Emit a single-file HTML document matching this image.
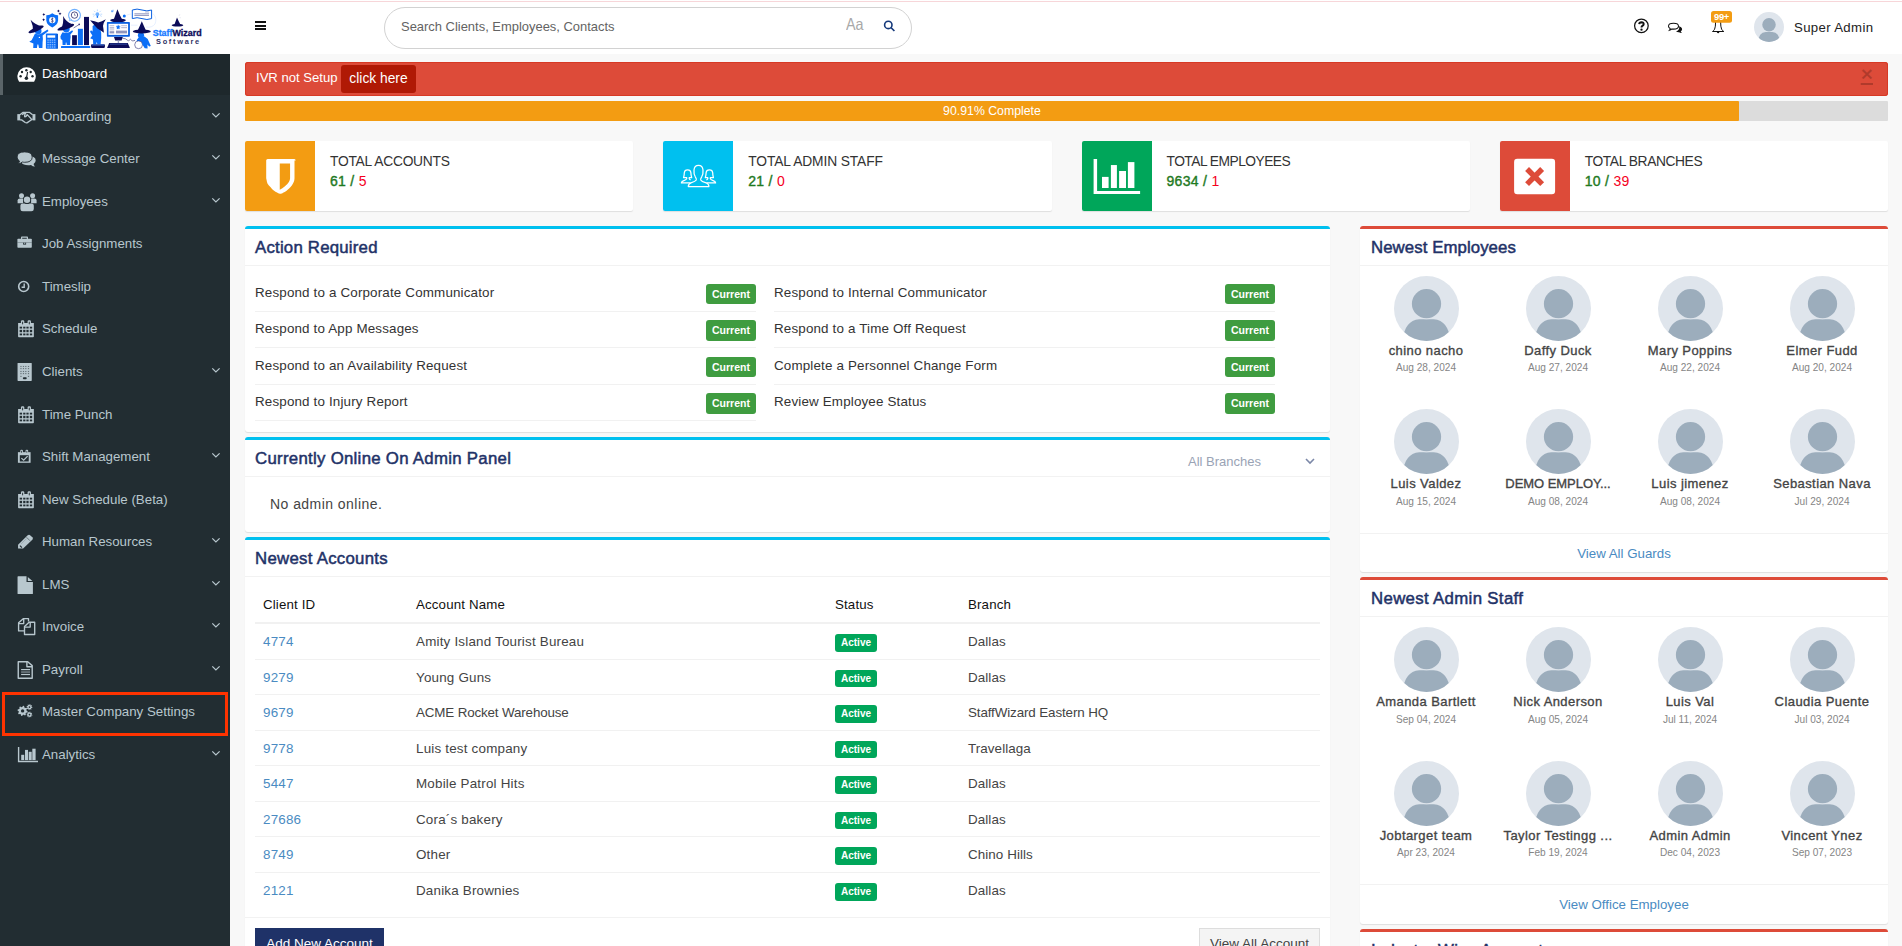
<!DOCTYPE html>
<html>
<head>
<meta charset="utf-8">
<title>Dashboard</title>
<style>
*{box-sizing:border-box;margin:0;padding:0}
html,body{width:1902px;height:946px;overflow:hidden}
body{font-family:"Liberation Sans",sans-serif;font-size:13px;color:#333;background:#f8f8f8;position:relative}
a{text-decoration:none;color:#4a8bc2}
#topline{position:absolute;left:0;top:1px;width:1902px;height:1px;background:#f7d6d9;z-index:5}
#header{position:absolute;left:0;top:0;width:1902px;height:54px;background:#fff}
#hamb{position:absolute;left:255px;top:21px;width:11px;height:9px}
#hamb i{display:block;height:2px;background:#111;margin-bottom:1.5px}
#search{position:absolute;left:384px;top:7px;width:528px;height:42px;border:1px solid #d2d2d2;border-radius:21px;background:#fff}
#search .ph{position:absolute;left:16px;top:11px;font-size:12.95px;color:#636363;white-space:nowrap}
#search .aa{position:absolute;left:461px;top:7px;font-size:16.5px;color:#a8a8a8;transform:scaleX(.87);transform-origin:0 0}
#search svg{position:absolute;left:498px;top:11px}
#sidebar{position:absolute;left:0;top:54px;width:230px;height:892px;background:#222d32}
.mi{position:absolute;left:0;width:230px;height:42.56px;color:#b8c7ce;font-size:13.3px}
.mi .t{position:absolute;left:42px;top:12px;line-height:16px;white-space:nowrap}
.mi svg.ic{position:absolute;left:16px;top:10px}
.mi svg.ch{position:absolute;left:211px;top:15px}
.mi.act{background:#1e282c;color:#fff;height:40.5px}
.mi.act:before{content:"";position:absolute;left:0;top:0;width:3px;height:100%;background:#5a6468}
#hl{position:absolute;left:2px;top:637.5px;width:225.5px;height:44px;border:3px solid #ff3300}
#alert{position:absolute;left:245px;top:62px;width:1643px;height:34px;background:#dd4b39;border-radius:3px;color:#fff;box-shadow:inset 0 0 0 1px #d73925}
#alert .at{position:absolute;left:11px;top:8px;font-size:13.1px}
#alert .btn{position:absolute;left:96px;top:3px;width:75px;height:28px;background:#b01905;border-radius:3px;font-size:13.8px;text-align:center;line-height:27px}
#alert .x{position:absolute;right:15px;top:0px;font-size:21px;-webkit-text-stroke:.4px #b03a2b;color:#b03a2b;text-decoration:underline}
#prog{position:absolute;left:245px;top:101px;width:1643px;height:20px;background:#dcdcdc;border-radius:1px}
#prog .bar{position:absolute;left:0;top:0;width:1494px;height:20px;background:#f39c12;border-radius:1px}
#prog .pt{position:absolute;left:0;top:3px;width:1494px;text-align:center;color:#fff;font-size:12.3px}
.stat{position:absolute;top:141px;width:388.25px;height:70px;background:#fff;border-radius:2px;box-shadow:0 1px 1px rgba(0,0,0,.1)}
.stat .sic{position:absolute;left:0;top:0;width:70px;height:70px;border-radius:2px 0 0 2px}
.stat .sic svg{position:absolute}
.stat .st{position:absolute;left:85px;top:13px;font-size:13.8px;color:#333;white-space:nowrap}
.stat .sn{position:absolute;left:85px;top:32px;font-size:14px;letter-spacing:.3px;white-space:nowrap}
.stat .g{color:#1f7a1f;-webkit-text-stroke:.4px #1f7a1f}.stat .r{color:#f5001d;font-weight:normal}
.panel{position:absolute;background:#fff;border-radius:3px;box-shadow:0 1px 1px rgba(0,0,0,.1)}
.panel .bt{position:absolute;left:0;top:0;width:100%;height:3px;border-radius:3px 3px 0 0}
.panel h3{position:absolute;left:10px;top:12px;font-size:16.8px;font-weight:normal;-webkit-text-stroke:.5px #1f3268;letter-spacing:.08px;color:#1f3268;line-height:20px;white-space:nowrap}
.panel .hs{position:absolute;left:0;top:39px;width:100%;height:1px;background:#f2f2f2}
.aqua{background:#00c0ef}.red{background:#dd4b39}
.ar{position:absolute;width:501px;height:37.2px;border-bottom:1px solid #f1f1f1}
.ar.nb{border-bottom:none}
.ar .tx{position:absolute;left:0;top:10px;font-size:13.4px;letter-spacing:.16px;color:#333;white-space:nowrap}
.ar .cur{position:absolute;right:0;top:9px;width:50px;height:20px;background:#3f9c40;color:#fff;border-radius:3px;font-size:10.5px;font-weight:bold;text-align:center;line-height:20px}
.sel{position:absolute;left:943px;top:17px;font-size:13px;color:#9aa3b5}
.noadm{position:absolute;left:25px;top:59px;font-size:14px;letter-spacing:.45px;color:#444}
.th{position:absolute;top:60px;font-size:13.3px;letter-spacing:.15px;color:#111;white-space:nowrap}
.thb{position:absolute;left:10px;top:85px;width:1065px;height:2px;background:#f1f1f1}
.tr{position:absolute;left:10px;width:1065px;height:35.57px;border-bottom:1px solid #f1f1f1;font-size:13.4px;letter-spacing:.2px;color:#444}
.tr .c1{position:absolute;left:8px;top:10px}
.tr .c2{position:absolute;left:161px;top:10px;white-space:nowrap}
.tr .c4{position:absolute;left:713px;top:10px;letter-spacing:.08px;white-space:nowrap}
.tr .act{position:absolute;left:580px;top:10px;letter-spacing:0;width:42px;height:17.6px;background:#00a65a;color:#fff;border-radius:3px;font-size:10px;font-weight:bold;text-align:center;line-height:17.6px}
.fs{position:absolute;left:0;top:380px;width:100%;height:1px;background:#f2f2f2}
.btn1{position:absolute;left:10px;top:391px;width:129px;height:34px;background:#1f3268;color:#fff;border-radius:0;font-size:13.5px;text-align:center;line-height:31px}
.btn2{position:absolute;left:954px;top:391px;width:121px;height:34px;background:#f4f4f4;border:1px solid #ddd;color:#444;border-radius:0;font-size:13.5px;text-align:center;line-height:30px}
.pp{position:absolute;width:132px;height:110px;text-align:center}
.pp svg{position:absolute;left:33.5px;top:0}
.pp .pn{position:absolute;left:0;top:67.3px;width:132px;font-size:13px;font-weight:normal;-webkit-text-stroke:.34px #444;color:#444;letter-spacing:.42px;white-space:nowrap}
.pp .pd{position:absolute;left:0;top:85.4px;width:132px;font-size:10.1px;color:#858585}
.fs2{position:absolute;left:0;top:307px;width:100%;height:1px;background:#f2f2f2}
.va{position:absolute;left:0;top:320px;width:100%;text-align:center;font-size:13.3px}
#uname{position:absolute;left:1794px;top:20px;font-size:13.2px;color:#222;white-space:nowrap;letter-spacing:.35px}
.tr:last-of-type{}
.tr.nb{border-bottom:none}

</style>
</head>
<body>
<div id="header"></div><div id="topline"></div>
<svg id="logo" style="position:absolute;left:0;top:0" width="230" height="54" viewBox="0 0 230 54"><g fill="#0b0b58"><path d="M43.8 13.1l.5 1 1 .5-1 .5-.5 1-.5-1-1-.5 1-.5z"/><path d="M43.6 18.3l.5 1 1 .5-1 .5-.5 1-.5-1-1-.5 1-.5z"/><path d="M58.4 9.5l.5 1 1 .5-1 .5-.5 1-.5-1-1-.5 1-.5z"/><path d="M60 12.3l.5 1 1 .5-1 .5-.5 1-.5-1-1-.5 1-.5z"/></g><path d="M46.3 15.2Q49.5 15.4 52.3 13.2Q55.1 15.4 58.1 15.2V20.5Q57.6 25 52.3 27.4Q46.8 25 46.3 20.5z" fill="#0c6ff7"/><circle cx="52.3" cy="20.1" r="3.2" fill="#fff"/><path d="M53.3 18.6Q52 17.9 51.5 18.9Q51.3 19.8 52.4 20.1Q53.5 20.5 53.2 21.5Q52.6 22.4 51.2 21.6M52.3 17.4V22.8" stroke="#0b0b58" stroke-width=".55" fill="none"/><g fill="#0c6ff7"><circle cx="38.2" cy="31" r="3.3"/><path d="M35 33.6Q38 35 41.2 33.4L47.6 29.6L48.5 30.9L42.6 35.6Q43.2 39 42.6 42.2L42.4 47.9H39L38.3 44.6H37.4L37 47.9H33.2L33.4 43.4L29.3 41.8L31.6 40.2Q33.4 37 35 33.6z"/></g><g fill="#0b0b58"><path d="M30.6 19.8Q34.6 24.6 41.8 26.2L33 31.5Q33.4 26 30.6 19.8z"/><ellipse cx="36.1" cy="29.3" rx="8.3" ry="2" transform="rotate(-24 36.1 29.3)"/></g><circle cx="39.4" cy="37.4" r=".7" fill="#fff"/><rect x="45.9" y="33.6" width="11.9" height="15.1" rx=".8" fill="#0c6ff7"/><rect x="47.3" y="35.3" width="7.9" height="2.4" fill="#fff"/><g fill="#7db3ff"><rect x="47.3" y="39.4" width="1.5" height="1.4"/><rect x="47.3" y="41.699999999999996" width="1.5" height="1.4"/><rect x="47.3" y="44" width="1.5" height="1.4"/><rect x="47.3" y="46.3" width="1.5" height="1.4"/><rect x="49.5" y="39.4" width="1.5" height="1.4"/><rect x="49.5" y="41.699999999999996" width="1.5" height="1.4"/><rect x="49.5" y="44" width="1.5" height="1.4"/><rect x="49.5" y="46.3" width="1.5" height="1.4"/><rect x="51.699999999999996" y="39.4" width="1.5" height="1.4"/><rect x="51.699999999999996" y="41.699999999999996" width="1.5" height="1.4"/><rect x="51.699999999999996" y="44" width="1.5" height="1.4"/><rect x="51.699999999999996" y="46.3" width="1.5" height="1.4"/><rect x="53.9" y="39.4" width="1.5" height="1.4"/><rect x="53.9" y="41.699999999999996" width="1.5" height="1.4"/><rect x="53.9" y="44" width="1.5" height="1.4"/><rect x="53.9" y="46.3" width="1.5" height="1.4"/></g><rect x="56.6" y="34" width="1.2" height="14.6" fill="#084fc0"/><circle cx="74.5" cy="15.3" r="5.9" fill="#fff" stroke="#6fb0ff" stroke-width="1.1"/><path d="M69.6 18.6L69.3 20.8L72 19.9z" fill="#fff" stroke="#6fb0ff" stroke-width=".7"/><circle cx="74.5" cy="15.1" r="3.2" fill="none" stroke="#2a2a6a" stroke-width=".8"/><path d="M74.5 13.4V15.3H75.8" stroke="#2a2a6a" stroke-width=".5" fill="none"/><rect x="61" y="46" width="29.2" height="2.1" rx=".6" fill="#0c6ff7"/><rect x="72.1" y="35.2" width="4.8" height="9.9" fill="#0b0b58"/><rect x="77.9" y="28.8" width="5" height="16.3" fill="#0c6ff7"/><rect x="84" y="16.9" width="5" height="28.2" fill="#0b0b58"/><g fill="#0c6ff7"><circle cx="66.3" cy="29" r="3.4"/><path d="M62.6 32.2Q66.3 33.6 69.6 32L72.2 30.3L73 31.5L70.4 34.4Q71 37 70.3 39.6L70 45.1H66.8L66.4 42.4H65.8L65.6 45.1H62.6L62.4 40.2Q60 38.6 60.4 36.4Q61.2 34 62.6 32.2z"/></g><path d="M73.6 28L79 24.6" stroke="#33337a" stroke-width=".6"/><circle cx="79.2" cy="24.4" r=".8" fill="#33337a"/><g fill="#0b0b58"><path d="M63.1 16.1Q66 22 71.8 24L61 29.4Q64 23 63.1 16.1z"/><ellipse cx="65.8" cy="27.2" rx="8.8" ry="2.05" transform="rotate(-18 65.8 27.2)"/></g><g fill="#0c6ff7"><path d="M92.6 26Q96 23 99.8 27Q101.8 33 101.2 38L100.6 44.5H97.4L96.8 41.8L96.2 44.5H93.2L93 39.6L90.2 38.2L92.4 35.6L90 31.8L91 30.2L92.6 31.6z"/></g><path d="M90.1 20.3Q95 21 98.2 22.4Q101.8 21.4 105.8 19.2Q103.2 23 103 26Q103.6 29.5 103.9 32.7Q100.8 30.4 97.4 28.4Q93.6 24.6 90.1 20.3z" fill="#0b0b58"/><rect x="91.1" y="44.3" width="13.8" height="3.6" rx=".8" fill="#0b0b58"/><rect x="92" y="44.3" width="12" height="1.2" fill="#3d6fd0"/><circle cx="97.4" cy="14.2" r="1.9" fill="#6fb0ff"/><rect x="96.7" y="15.8" width="1.4" height="2" fill="#0c6ff7"/><g stroke="#6fb0ff" stroke-width=".45"><path d="M100.4 14.2L102.2 14.2"/><path d="M94.4 14.2L92.6 14.2"/><path d="M97.4 11.2L97.4 9.4"/><path d="M99.5 12.1L100.8 10.8"/><path d="M95.3 12.1L94 10.8"/><path d="M100.1 15.5L101.7 16.4"/><path d="M94.7 15.5L93.1 16.4"/></g><g fill="#0b0b58"><path d="M111.5 10.5l.5 1.8M113 9.8l-.3 2.2" stroke="#0c6ff7" stroke-width=".7"/><g><ellipse cx="118" cy="20.3" rx="7.8" ry="1.9"/><path d="M117.4 9.2Q115.51 14.55 113.5 20.3H122.5Q119.47 14.55 117.4 9.2z"/></g></g><rect x="106.9" y="22" width="23" height="14.8" rx=".8" fill="#0a5fe0"/><rect x="108.5" y="23.8" width="19.6" height="11.1" fill="#fff"/><g fill="#b9bdd6"><rect x="109.6" y="25.2" width="4.6" height="1"/><rect x="109.6" y="27" width="4.6" height="1.6"/><rect x="109.6" y="29.4" width="4.6" height="1"/><rect x="109.6" y="31.2" width="4.6" height="2.2" fill="#8f95bd"/><rect x="121.2" y="25.2" width="5.8" height="1"/><rect x="121.2" y="27" width="5.8" height="1.2"/><rect x="116" y="30.6" width="11" height="2.8" fill="#8f95bd"/></g><circle cx="118.2" cy="27" r="2.4" fill="#d6e6ff"/><path d="M118.2 24.8l.7 1.5 1.6.2-1.2 1.1.3 1.6-1.4-.8-1.4.8.3-1.6-1.2-1.1 1.6-.2z" fill="#0c6ff7"/><path d="M114 37H122.8L121.6 40.6H115.2z" fill="#0b0b58"/><rect x="117.7" y="40.6" width="1.4" height="2.6" fill="#9aa0c8"/><path d="M109.2 43.1H127.8L129.9 47.9H107.1z" fill="#0b0b58"/><path d="M110 44.1H127.3" stroke="#3d5fb8" stroke-width=".8"/><path d="M122.5 38.2Q126 38.4 127.4 40.2Q128.6 41.4 129.6 40Q130.4 38.4 131.4 40.2Q132.4 41.6 135 40.4" stroke="#2b2b6b" stroke-width=".6" fill="none"/><path d="M132.3 10Q137 8.2 142 10Q147 11.8 151.6 10V18.6Q147 20.4 142 18.6Q137 16.8 132.3 18.6z" fill="#fff" stroke="#0a5fe0" stroke-width="1"/><g fill="#a9aed0"><rect x="134.4" y="13" width="14.6" height=".9"/><rect x="134.4" y="14.6" width="14.6" height="1.3" fill="#8f95bd"/><rect x="145" y="11.6" width="4" height=".8"/></g><circle cx="124.3" cy="15.9" r="1.5" fill="#0c6ff7"/><path d="M126.5 15.3Q129 14 131.5 14" stroke="#cfe2ff" stroke-width=".5" fill="none"/><path d="M153 13.5Q157.5 18 155 24Q152 28 146 27" stroke="#d6e6ff" stroke-width=".6" fill="none"/><path d="M131 25.2H137.5" stroke="#d6e6ff" stroke-width=".6"/><g fill="#0c6ff7"><circle cx="141" cy="35.3" r="3.1"/><path d="M138.5 37.5L144.5 36.5Q147.5 38 148.8 41.5L150.8 46L149.2 46.4L147.4 44.4L147.6 48.4L145.2 48.2L143.2 44.4L140.6 42.2L137 41.6L136.8 40z"/></g><circle cx="138.6" cy="44.8" r="3.9" fill="#fff" stroke="#33337a" stroke-width=".6"/><path d="M143 42L146.5 47.8L144.8 48.2L142 44z" fill="#0c6ff7"/><g fill="#0b0b58"><g><ellipse cx="141.8" cy="31.4" rx="9" ry="2"/><path d="M141.8 21.3Q139.86800000000002 26.150000000000002 137.20000000000002 31.4H146.4Q143.91600000000003 26.150000000000002 141.8 21.3z"/></g></g><g fill="#0b0b58"><g><ellipse cx="177.5" cy="25.2" rx="5.8" ry="1.35"/><path d="M177 17.4Q175.614 21.099999999999998 174.2 25.2H180.8Q178.518 21.099999999999998 177 17.4z"/></g></g><path d="M178.8 15.4l1.4-.8M179.6 17.6l1.2.2" stroke="#c9cbe0" stroke-width=".5"/><text x="152.7" y="36" font-family="Liberation Sans,sans-serif" font-weight="bold" font-size="8.7" textLength="48.9" lengthAdjust="spacingAndGlyphs" stroke-width=".3"><tspan fill="#1a7bff" stroke="#1a7bff">Staff</tspan><tspan fill="#0b0b58" stroke="#0b0b58">Wizard</tspan></text><text x="156" y="43.9" font-family="Liberation Sans,sans-serif" font-weight="bold" font-size="7.4" fill="#2f2f63" textLength="43.2" lengthAdjust="spacing">Software</text></svg>
<div id="hamb"><i></i><i></i><i></i></div>
<div id="search"><span class="ph">Search Clients, Employees, Contacts</span><span class="aa">Aa</span><svg width="14" height="14" viewBox="0 0 14 14"><circle cx="5.3" cy="5.9" r="3.7" fill="none" stroke="#14387a" stroke-width="1.6"/><path d="M7.9 8.5l3.5 3.5" stroke="#14387a" stroke-width="1.7"/></svg></div>
<svg style="position:absolute;left:1630px;top:8px" width="110" height="34" viewBox="1630 8 110 34"><circle cx="1641.4" cy="25.85" r="6.8" fill="none" stroke="#111" stroke-width="1.25"/><path d="M1639.2 24.1Q1639.3 22.2 1641.5 22.2Q1643.8 22.3 1643.7 24.1Q1643.6 25.2 1642.4 25.9Q1641.5 26.5 1641.5 27.5" fill="none" stroke="#111" stroke-width="1.95"/><circle cx="1641.5" cy="29.7" r="1.15" fill="#111"/><path d="M1677.8 25.9Q1682.2 26.8 1682.1 29.3Q1682 30.7 1680.7 31.5Q1681.1 32.4 1682 33Q1680.2 33.1 1679 32.2Q1677.4 32.3 1676 31.6Q1679.6 29.8 1679.2 27.2Q1678.8 26.3 1677.8 25.9z" fill="#111"/><path d="M1673.5 23.3Q1678.5 23.3 1678.5 26.2Q1678.5 29.1 1673.5 29.1Q1672.6 29.1 1671.8 28.95Q1670.8 30 1669.4 30.3Q1670.1 29.5 1670.2 28.5Q1668.5 27.6 1668.5 26.2Q1668.5 23.3 1673.5 23.3z" fill="#fff" stroke="#111" stroke-width="1.05"/><path d="M1715.6 21.5Q1715.6 27 1714.6 29.2Q1713.8 30.7 1712.5 31.5H1723.8Q1722.4 30.7 1721.6 29.2Q1720.6 27 1720.6 21.5" fill="none" stroke="#111" stroke-width="1"/><path d="M1716.6 31.8Q1718.1 34.8 1719.6 31.8z" fill="#111"/><rect x="1711" y="11" width="21" height="11.7" rx="2.5" fill="#f39c12"/><text x="1721.5" y="20.1" text-anchor="middle" font-family="Liberation Sans,sans-serif" font-weight="bold" font-size="9.4" fill="#fff" letter-spacing="-.3">99+</text></svg><svg style="position:absolute;left:1754px;top:12px" width="30" height="30" viewBox="0 0 64 64"><defs><clipPath id="c0"><circle cx="32" cy="32" r="32"/></clipPath></defs><circle cx="32" cy="32" r="32" fill="#dfe5ec"/><g clip-path="url(#c0)" fill="#9cadbc"><path d="M8.5 68Q8.5 44 25 42.6H39Q55.5 44 55.5 68z"/><circle cx="32" cy="27.3" r="15.4" fill="#dfe5ec"/><circle cx="32" cy="27.3" r="14.4"/></g></svg><span id="uname">Super Admin</span>
<div id="sidebar">
<div class="mi act" style="top:0.00px"><svg class="ic" width="24" height="22" viewBox="0 0 24 22" fill="currentColor"><path d="M3.1 17.8A9.2 9.2 0 1 1 18.1 17.8z"/><g fill="#1e282c"><circle cx="4.6" cy="12.3" r="1.2"/><circle cx="6" cy="8" r="1.2"/><circle cx="10.4" cy="6.2" r="1.2"/><circle cx="14.7" cy="8" r="1.2"/><circle cx="16.5" cy="12.3" r="1.2"/><circle cx="10.4" cy="14.2" r="1.75"/><path d="M10 13.5L11 8h1.1L11.3 13.6z"/></g></svg><span class="t">Dashboard</span></div>
<div class="mi" style="top:42.56px"><svg class="ic" width="24" height="22" viewBox="0 0 24 22" fill="currentColor"><rect x="1.3" y="7.1" width="2.9" height="6.3"/><rect x="16.5" y="7.1" width="2.9" height="6.3"/><path d="M4 7.8L6.8 5.4H13.6L16.6 7.8M4 12.8L5.6 12.9L9.2 15.5Q10.5 16.2 11.7 15.4L16.6 12M6.2 8Q7.8 5.7 9.8 5.9Q8 8.5 8.6 9.7Q10 10.1 11.2 7.6L15.4 12" fill="none" stroke="currentColor" stroke-width="1.3" stroke-linejoin="round"/></svg><span class="t">Onboarding</span><svg class="ch" width="10" height="7" viewBox="0 0 10 7"><path d="M1.3 1.4L4.9 4.9L8.6 1.4" fill="none" stroke="currentColor" stroke-width="1.25"/></svg></div>
<div class="mi" style="top:85.12px"><svg class="ic" width="24" height="22" viewBox="0 0 24 22" fill="currentColor"><path d="M12.2 7Q19.7 7 19.7 11.6Q19.7 13.6 17.6 14.9Q17.7 16.3 19 17.4Q16.6 17.4 15 15.9Q13.6 16.2 12.2 16.2Q7 16.2 5.4 13.6L12 7z"/><path d="M8.65 2.9Q16.2 2.9 16.2 8.1Q16.2 13.3 8.65 13.3Q7.6 13.3 6.3 13Q4.6 14.7 1.9 14.8Q3.3 13.7 3.5 12Q1.1 10.6 1.1 8.1Q1.1 2.9 8.65 2.9z" stroke="#222d32" stroke-width=".9"/></svg><span class="t">Message Center</span><svg class="ch" width="10" height="7" viewBox="0 0 10 7"><path d="M1.3 1.4L4.9 4.9L8.6 1.4" fill="none" stroke="currentColor" stroke-width="1.25"/></svg></div>
<div class="mi" style="top:127.69px"><svg class="ic" width="24" height="22" viewBox="0 0 24 22" fill="currentColor"><circle cx="5.5" cy="3.8" r="2.5"/><circle cx="16.6" cy="3.8" r="2.5"/><path d="M1.6 11.3V8.6Q1.6 6.4 3.8 6.4H7.1V11.3z"/><path d="M20.6 11.3V8.6Q20.6 6.4 18.4 6.4H15.1V11.3z"/><circle cx="11" cy="7.7" r="3.9" fill="#222d32"/><circle cx="11" cy="7.7" r="3.2"/><path d="M4.4 17V13.6Q4.4 11.4 6.8 11.4H8.4Q11 12.6 13.8 11.4H15.4Q17.8 11.4 17.8 13.6V17Q17.8 19.2 15.4 19.2H6.8Q4.4 19.2 4.4 17z"/></svg><span class="t">Employees</span><svg class="ch" width="10" height="7" viewBox="0 0 10 7"><path d="M1.3 1.4L4.9 4.9L8.6 1.4" fill="none" stroke="currentColor" stroke-width="1.25"/></svg></div>
<div class="mi" style="top:170.25px"><svg class="ic" width="24" height="22" viewBox="0 0 24 22" fill="currentColor"><path d="M5 4.9V3.3Q5 2.5 5.8 2.5H11.2Q12 2.5 12 3.3V4.9H10.8V3.8H6.2V4.9z"/><rect x="1.4" y="4.8" width="14.4" height="9" rx=".8"/><rect x="1.4" y="8.3" width="14.4" height=".6" fill="#222d32" opacity=".45"/><rect x="7.1" y="8.7" width="3" height="1.9" fill="#222d32"/><rect x="7.9" y="8.7" width="1.4" height="1" /></svg><span class="t">Job Assignments</span></div>
<div class="mi" style="top:212.81px"><svg class="ic" width="24" height="22" viewBox="0 0 24 22" fill="currentColor"><circle cx="7.7" cy="9.5" r="5" fill="none" stroke="currentColor" stroke-width="1.6"/><path d="M8.2 6.6V10.2H5.6" fill="none" stroke="currentColor" stroke-width="1.4"/></svg><span class="t">Timeslip</span></div>
<div class="mi" style="top:255.38px"><svg class="ic" width="24" height="22" viewBox="0 0 24 22" fill="currentColor"><g transform="translate(.65 .5) scale(.935 .96)"><path d="M1.55 3.6H18.4V17.6Q18.4 18.45 17.5 18.45H2.4Q1.55 18.45 1.55 17.6z"/><rect x="4.6" y=".7" width="3.6" height="5" rx="1.4"/><rect x="11.7" y=".7" width="3.6" height="5" rx="1.4"/><g fill="#222d32"><rect x="5.9" y="2.2" width="1" height="3.1" rx=".5"/><rect x="13" y="2.2" width="1" height="3.1" rx=".5"/><rect x="3.2" y="7.5" width="2.6" height="1.9"/><rect x="7.0" y="7.5" width="2.4" height="1.9"/><rect x="10.4" y="7.5" width="2.4" height="1.9"/><rect x="14.1" y="7.5" width="2.5" height="1.9"/><rect x="3.2" y="10.75" width="2.6" height="2.5"/><rect x="7.0" y="10.75" width="2.4" height="2.5"/><rect x="10.4" y="10.75" width="2.4" height="2.5"/><rect x="14.1" y="10.75" width="2.5" height="2.5"/><rect x="3.2" y="14.6" width="2.6" height="1.9"/><rect x="7.0" y="14.6" width="2.4" height="1.9"/><rect x="10.4" y="14.6" width="2.4" height="1.9"/><rect x="14.1" y="14.6" width="2.5" height="1.9"/></g></g></svg><span class="t">Schedule</span></div>
<div class="mi" style="top:297.94px"><svg class="ic" width="24" height="22" viewBox="0 0 24 22" fill="currentColor"><rect x="1.55" y="1" width="14.2" height="17.9" rx=".6"/><g fill="#222d32"><rect x="6.9" y="15.2" width="3.8" height="2" rx=".9"/></g><g fill="#222d32" opacity=".55"><rect x="4.3500000000000005" y="3.95" width="1.2" height="1.1"/><rect x="6.87" y="3.95" width="1.2" height="1.1"/><rect x="9.200000000000001" y="3.95" width="1.2" height="1.1"/><rect x="11.9" y="3.95" width="1.2" height="1.1"/><rect x="4.3500000000000005" y="6.05" width="1.2" height="1.1"/><rect x="6.87" y="6.05" width="1.2" height="1.1"/><rect x="9.200000000000001" y="6.05" width="1.2" height="1.1"/><rect x="11.9" y="6.05" width="1.2" height="1.1"/><rect x="4.3500000000000005" y="8.95" width="1.2" height="1.1"/><rect x="6.87" y="8.95" width="1.2" height="1.1"/><rect x="9.200000000000001" y="8.95" width="1.2" height="1.1"/><rect x="11.9" y="8.95" width="1.2" height="1.1"/><rect x="4.3500000000000005" y="11.049999999999999" width="1.2" height="1.1"/><rect x="6.87" y="11.049999999999999" width="1.2" height="1.1"/><rect x="9.200000000000001" y="11.049999999999999" width="1.2" height="1.1"/><rect x="11.9" y="11.049999999999999" width="1.2" height="1.1"/><rect x="4.35" y="13.85" width="1.2" height="1.1"/><rect x="11.9" y="13.85" width="1.2" height="1.1"/></g></svg><span class="t">Clients</span><svg class="ch" width="10" height="7" viewBox="0 0 10 7"><path d="M1.3 1.4L4.9 4.9L8.6 1.4" fill="none" stroke="currentColor" stroke-width="1.25"/></svg></div>
<div class="mi" style="top:340.50px"><svg class="ic" width="24" height="22" viewBox="0 0 24 22" fill="currentColor"><g transform="translate(.65 .5) scale(.935 .96)"><path d="M1.55 3.6H18.4V17.6Q18.4 18.45 17.5 18.45H2.4Q1.55 18.45 1.55 17.6z"/><rect x="4.6" y=".7" width="3.6" height="5" rx="1.4"/><rect x="11.7" y=".7" width="3.6" height="5" rx="1.4"/><g fill="#222d32"><rect x="5.9" y="2.2" width="1" height="3.1" rx=".5"/><rect x="13" y="2.2" width="1" height="3.1" rx=".5"/><rect x="3.2" y="7.5" width="2.6" height="1.9"/><rect x="7.0" y="7.5" width="2.4" height="1.9"/><rect x="10.4" y="7.5" width="2.4" height="1.9"/><rect x="14.1" y="7.5" width="2.5" height="1.9"/><rect x="3.2" y="10.75" width="2.6" height="2.5"/><rect x="7.0" y="10.75" width="2.4" height="2.5"/><rect x="10.4" y="10.75" width="2.4" height="2.5"/><rect x="14.1" y="10.75" width="2.5" height="2.5"/><rect x="3.2" y="14.6" width="2.6" height="1.9"/><rect x="7.0" y="14.6" width="2.4" height="1.9"/><rect x="10.4" y="14.6" width="2.4" height="1.9"/><rect x="14.1" y="14.6" width="2.5" height="1.9"/></g></g></svg><span class="t">Time Punch</span></div>
<div class="mi" style="top:383.06px"><svg class="ic" width="24" height="22" viewBox="0 0 24 22" fill="currentColor"><g transform="translate(.6 .5) scale(.94 .95)"><path d="M1.4 4.9H14.9V16.1H1.4z"/><rect x="3.9" y="2.3" width="2.8" height="4" rx="1.2"/><rect x="9.5" y="2.3" width="2.8" height="4" rx="1.2"/><g fill="#222d32"><rect x="4.9" y="3.4" width=".8" height="2.2" rx=".4"/><rect x="10.5" y="3.4" width=".8" height="2.2" rx=".4"/><rect x="3.4" y="8.1" width="9.5" height="6.6"/></g><path d="M5.1 11.2L7.5 13.4L11.75 9.1" fill="none" stroke="currentColor" stroke-width="1.3"/></g></svg><span class="t">Shift Management</span><svg class="ch" width="10" height="7" viewBox="0 0 10 7"><path d="M1.3 1.4L4.9 4.9L8.6 1.4" fill="none" stroke="currentColor" stroke-width="1.25"/></svg></div>
<div class="mi" style="top:425.62px"><svg class="ic" width="24" height="22" viewBox="0 0 24 22" fill="currentColor"><g transform="translate(.65 .5) scale(.935 .96)"><path d="M1.55 3.6H18.4V17.6Q18.4 18.45 17.5 18.45H2.4Q1.55 18.45 1.55 17.6z"/><rect x="4.6" y=".7" width="3.6" height="5" rx="1.4"/><rect x="11.7" y=".7" width="3.6" height="5" rx="1.4"/><g fill="#222d32"><rect x="5.9" y="2.2" width="1" height="3.1" rx=".5"/><rect x="13" y="2.2" width="1" height="3.1" rx=".5"/><rect x="3.2" y="7.5" width="2.6" height="1.9"/><rect x="7.0" y="7.5" width="2.4" height="1.9"/><rect x="10.4" y="7.5" width="2.4" height="1.9"/><rect x="14.1" y="7.5" width="2.5" height="1.9"/><rect x="3.2" y="10.75" width="2.6" height="2.5"/><rect x="7.0" y="10.75" width="2.4" height="2.5"/><rect x="10.4" y="10.75" width="2.4" height="2.5"/><rect x="14.1" y="10.75" width="2.5" height="2.5"/><rect x="3.2" y="14.6" width="2.6" height="1.9"/><rect x="7.0" y="14.6" width="2.4" height="1.9"/><rect x="10.4" y="14.6" width="2.4" height="1.9"/><rect x="14.1" y="14.6" width="2.5" height="1.9"/></g></g></svg><span class="t">New Schedule (Beta)</span></div>
<div class="mi" style="top:468.19px"><svg class="ic" width="24" height="22" viewBox="0 0 24 22" fill="currentColor"><g transform="translate(.9 .7) scale(.93)"><path d="M1.25 17.1V12.9L11.6 2.8Q13.2 1.6 14.8 3.2L16.6 5Q17.8 6.4 16.6 7.6L6.7 17.1z"/><path d="M10.4 4.9L14 8.6" stroke="#222d32" stroke-width=".7" opacity=".8"/><path d="M3.2 13.8L5.4 16" stroke="#222d32" stroke-width="1.2"/><path d="M4.6 12L10.4 6.3" stroke="#222d32" stroke-width=".5" opacity=".4"/></g></svg><span class="t">Human Resources</span><svg class="ch" width="10" height="7" viewBox="0 0 10 7"><path d="M1.3 1.4L4.9 4.9L8.6 1.4" fill="none" stroke="currentColor" stroke-width="1.25"/></svg></div>
<div class="mi" style="top:510.75px"><svg class="ic" width="24" height="22" viewBox="0 0 24 22" fill="currentColor"><path d="M1.55 1.75Q1.55 1.15 2.15 1.15H10.5V6.95H16.9V18.45Q16.9 19.05 16.3 19.05H2.15Q1.55 19.05 1.55 18.45z"/><path d="M11.8 1.9L16.4 6.1H11.8z"/></svg><span class="t">LMS</span><svg class="ch" width="10" height="7" viewBox="0 0 10 7"><path d="M1.3 1.4L4.9 4.9L8.6 1.4" fill="none" stroke="currentColor" stroke-width="1.25"/></svg></div>
<div class="mi" style="top:553.31px"><svg class="ic" width="24" height="22" viewBox="0 0 24 22" fill="currentColor"><g fill="none" stroke="currentColor" stroke-width="1.35" stroke-linejoin="round"><path d="M12.5 4.6V1.65H7.2L2.6 5.8V13.9H8.3"/><path d="M7.7 1.7V6.6H2.7"/><path d="M13.1 5.2H18.7V17.5H8.5V9.6z"/><path d="M14.2 5.3V10.1H8.6"/></g></svg><span class="t">Invoice</span><svg class="ch" width="10" height="7" viewBox="0 0 10 7"><path d="M1.3 1.4L4.9 4.9L8.6 1.4" fill="none" stroke="currentColor" stroke-width="1.25"/></svg></div>
<div class="mi" style="top:595.88px"><svg class="ic" width="24" height="22" viewBox="0 0 24 22" fill="currentColor"><g fill="none" stroke="currentColor" stroke-width="1.4" stroke-linejoin="round"><path d="M2.25 1.75H11.7L16.2 5.6V18.25H2.25z"/><path d="M10.9 1.8V6.8H16.1"/></g><rect x="5.1" y="9" width="8.9" height="1.2"/><rect x="5.1" y="11.3" width="8.9" height="1.5" opacity=".55"/><rect x="5.1" y="13.9" width="8.9" height="1.2"/></svg><span class="t">Payroll</span><svg class="ch" width="10" height="7" viewBox="0 0 10 7"><path d="M1.3 1.4L4.9 4.9L8.6 1.4" fill="none" stroke="currentColor" stroke-width="1.25"/></svg></div>
<div class="mi" style="top:638.44px"><svg class="ic" width="24" height="22" viewBox="0 0 24 22" fill="currentColor"><path d="M11.68 9.40L11.48 10.38L10.04 10.74L9.61 11.37L9.84 12.84L9.00 13.40L7.73 12.63L6.98 12.78L6.10 13.98L5.12 13.78L4.76 12.34L4.13 11.91L2.66 12.14L2.10 11.30L2.87 10.03L2.72 9.28L1.52 8.40L1.72 7.42L3.16 7.06L3.59 6.43L3.36 4.96L4.20 4.40L5.47 5.17L6.22 5.02L7.10 3.82L8.08 4.02L8.44 5.46L9.07 5.89L10.54 5.66L11.10 6.50L10.33 7.77L10.48 8.52z"/><circle cx="6.6" cy="8.9" r="1.7" fill="#222d32"/><path d="M16.49 5.39L16.37 5.97L15.35 6.09L15.12 6.43L15.40 7.42L14.91 7.75L14.11 7.11L13.71 7.19L13.21 8.09L12.63 7.97L12.51 6.95L12.17 6.72L11.18 7.00L10.85 6.51L11.49 5.71L11.41 5.31L10.51 4.81L10.63 4.23L11.65 4.11L11.88 3.77L11.60 2.78L12.09 2.45L12.89 3.09L13.29 3.01L13.79 2.11L14.37 2.23L14.49 3.25L14.83 3.48L15.82 3.20L16.15 3.69L15.51 4.49L15.59 4.89z"/><circle cx="13.5" cy="5.1" r="0.85" fill="#222d32"/><path d="M16.49 12.89L16.37 13.47L15.35 13.59L15.12 13.93L15.40 14.92L14.91 15.25L14.11 14.61L13.71 14.69L13.21 15.59L12.63 15.47L12.51 14.45L12.17 14.22L11.18 14.50L10.85 14.01L11.49 13.21L11.41 12.81L10.51 12.31L10.63 11.73L11.65 11.61L11.88 11.27L11.60 10.28L12.09 9.95L12.89 10.59L13.29 10.51L13.79 9.61L14.37 9.73L14.49 10.75L14.83 10.98L15.82 10.70L16.15 11.19L15.51 11.99L15.59 12.39z"/><circle cx="13.5" cy="12.6" r="0.85" fill="#222d32"/></svg><span class="t">Master Company Settings</span></div>
<div class="mi" style="top:681.00px"><svg class="ic" width="24" height="22" viewBox="0 0 24 22" fill="currentColor"><path d="M1.9 2.1H3.3V15.85H22V17.2H1.9z"/><rect x="5.2" y="9.8" width="3" height="5.3"/><rect x="9" y="4.9" width="3" height="10.2"/><rect x="12.7" y="6.8" width="3" height="8.3"/><rect x="16.3" y="3.7" width="3.3" height="11.4"/></svg><span class="t">Analytics</span><svg class="ch" width="10" height="7" viewBox="0 0 10 7"><path d="M1.3 1.4L4.9 4.9L8.6 1.4" fill="none" stroke="currentColor" stroke-width="1.25"/></svg></div>
<div id="hl"></div>
</div>
<div id="alert"><span class="at">IVR not Setup</span><span class="btn">click here</span><span class="x">&times;</span></div>
<div id="prog"><div class="bar"></div><span class="pt">90.91% Complete</span></div>
<div class="stat" style="left:245px"><div class="sic" style="background:#f39c12"><svg style="left:0;top:0" width="70" height="70" viewBox="0 0 70 70"><path transform="translate(20 53.4) scale(.02305 -.02305)" d="M1088 704v640h-448v-1137q119 63 213 137q235 184 235 360zM1280 1472v-768q0 -86 -33.5 -170.5t-83 -150t-118 -127.5t-109.5 -99t-104.5 -66t-77 -37t-36.5 -15.5q-24 -12 -52 -12t-52 12q-1 1 -36.5 15.5t-77 37t-104.5 66t-109.5 99t-118 127.5t-83 150t-33.5 170.5v768q0 26 19 45t45 19h1152q26 0 45 -19t19 -45z" fill="#fff"/></svg></div><div class="st" style="letter-spacing:-0.25px">TOTAL ACCOUNTS</div><div class="sn"><span class="g">61 /</span> <span class="r">5</span></div></div>
<div class="stat" style="left:663.25px"><div class="sic" style="background:#00c0ef"><svg style="left:0;top:0" width="70" height="70" viewBox="0 0 70 70"><g fill="none" stroke="#fff" stroke-width="1.25" stroke-linejoin="round"><path d="M25.3 45.6Q25.3 42.5 28.5 41.6Q32.3 40.6 33.3 39Q33.6 37.6 32.3 35.8Q30.6 33 31 29Q31.4 24.3 35.5 24.3Q39.6 24.3 40 29Q40.4 33 38.7 35.8Q37.4 37.6 37.7 39Q38.7 40.6 42.5 41.6Q45.9 42.5 45.9 45.6z"/><path d="M27.5 41.9H18.4Q18.6 40.2 20.9 39.6Q23.4 38.9 23.7 37.7V36.7H20.6Q21.3 34 21.3 31.8Q21.6 28.9 24.6 28.9Q27.6 28.9 27.9 31.8Q27.9 34 28.7 36.7H26.2V37.6Q26.4 38.4 27.6 38.9"/><path d="M43.5 41.9 H52.6 Q52.4 40.2 50.1 39.6 Q47.6 38.9 47.3 37.7 V36.7 H50.4 Q49.7 34 49.7 31.8 Q49.4 28.9 46.4 28.9 Q43.4 28.9 43.1 31.8 Q43.1 34 42.3 36.7 H44.8 V37.6 Q44.6 38.4 43.4 38.9 "/></g></svg></div><div class="st" style="letter-spacing:-0.13px">TOTAL ADMIN STAFF</div><div class="sn"><span class="g">21 /</span> <span class="r">0</span></div></div>
<div class="stat" style="left:1081.5px"><div class="sic" style="background:#00a65a"><svg style="left:0;top:0" width="70" height="70" viewBox="0 0 70 70" fill="#fff"><path d="M11.6 18.1H15.1V50H58.1V52.9H11.6z"/><rect x="20" y="35.9" width="6.6" height="11.1"/><rect x="28.9" y="24.05" width="6" height="22.95"/><rect x="37.1" y="30" width="6.9" height="17"/><rect x="45.9" y="21.1" width="6.5" height="25.9"/></svg></div><div class="st" style="letter-spacing:-0.53px">TOTAL EMPLOYEES</div><div class="sn"><span class="g">9634 /</span> <span class="r">1</span></div></div>
<div class="stat" style="left:1499.75px"><div class="sic" style="background:#dd4b39"><svg style="left:0;top:0" width="70" height="70" viewBox="0 0 70 70"><rect x="14.1" y="17.8" width="41" height="35.5" rx="3.2" fill="#fff"/><g transform="rotate(45 34.6 35.6)" fill="#dd4b39"><rect x="23.95" y="32.85" width="21.3" height="5.5"/><rect x="31.85" y="24.95" width="5.5" height="21.3"/></g></svg></div><div class="st" style="letter-spacing:-0.41px">TOTAL BRANCHES</div><div class="sn"><span class="g">10 /</span> <span class="r">39</span></div></div>
<div class="panel" style="left:245px;top:226px;width:1085px;height:206px"><div class="bt aqua"></div><h3 style="letter-spacing:.22px">Action Required</h3><div class="hs"></div>
<div class="ar" style="left:10px;top:49.0px"><span class="tx">Respond to a Corporate Communicator</span><span class="cur">Current</span></div>
<div class="ar" style="left:529px;top:49.0px"><span class="tx">Respond to Internal Communicator</span><span class="cur">Current</span></div>
<div class="ar" style="left:10px;top:85.0px"><span class="tx">Respond to App Messages</span><span class="cur" style="height:21px;line-height:21px">Current</span></div>
<div class="ar" style="left:529px;top:85.0px"><span class="tx">Respond to a Time Off Request</span><span class="cur" style="height:21px;line-height:21px">Current</span></div>
<div class="ar" style="left:10px;top:122.0px"><span class="tx">Respond to an Availability Request</span><span class="cur">Current</span></div>
<div class="ar" style="left:529px;top:122.0px"><span class="tx">Complete a Personnel Change Form</span><span class="cur">Current</span></div>
<div class="ar" style="left:10px;top:158.0px"><span class="tx">Respond to Injury Report</span><span class="cur" style="height:21px;line-height:21px">Current</span></div>
<div class="ar nb" style="left:529px;top:158.0px"><span class="tx">Review Employee Status</span><span class="cur" style="height:21px;line-height:21px">Current</span></div>
</div>
<div class="panel" style="left:245px;top:437px;width:1085px;height:95px"><div class="bt aqua"></div><h3 style="letter-spacing:.29px">Currently Online On Admin Panel</h3><div class="hs"></div><span class="sel">All Branches</span><svg style="position:absolute;left:1060px;top:21px" width="10" height="7" viewBox="0 0 10 7"><path d="M1 1l4 4 4-4" fill="none" stroke="#7c88a8" stroke-width="1.6"/></svg><span class="noadm">No admin online.</span></div>
<div class="panel" style="left:245px;top:537px;width:1085px;height:430px"><div class="bt aqua"></div><h3 style="letter-spacing:.28px">Newest Accounts</h3><div class="hs"></div>
<div class="th" style="left:18px">Client ID</div><div class="th" style="left:171px">Account Name</div><div class="th" style="left:590px">Status</div><div class="th" style="left:723px">Branch</div><div class="thb"></div>
<div class="tr" style="top:87.00px"><a class="c1">4774</a><span class="c2">Amity Island Tourist Bureau</span><span class="act">Active</span><span class="c4">Dallas</span></div>
<div class="tr" style="top:122.57px"><a class="c1">9279</a><span class="c2">Young Guns</span><span class="act">Active</span><span class="c4">Dallas</span></div>
<div class="tr" style="top:158.14px"><a class="c1">9679</a><span class="c2"><span style="letter-spacing:-.15px">ACME Rocket Warehouse</span></span><span class="act">Active</span><span class="c4"><span style="letter-spacing:-.12px">StaffWizard Eastern HQ</span></span></div>
<div class="tr" style="top:193.71px"><a class="c1">9778</a><span class="c2">Luis test company</span><span class="act">Active</span><span class="c4">Travellaga</span></div>
<div class="tr" style="top:229.28px"><a class="c1">5447</a><span class="c2">Mobile Patrol Hits</span><span class="act">Active</span><span class="c4">Dallas</span></div>
<div class="tr" style="top:264.85px"><a class="c1">27686</a><span class="c2">Cora&acute;s bakery</span><span class="act">Active</span><span class="c4">Dallas</span></div>
<div class="tr" style="top:300.42px"><a class="c1">8749</a><span class="c2">Other</span><span class="act">Active</span><span class="c4">Chino Hills</span></div>
<div class="tr nb" style="top:335.99px"><a class="c1">2121</a><span class="c2">Danika Brownies</span><span class="act">Active</span><span class="c4">Dallas</span></div>
<div class="fs"></div><span class="btn1">Add New Account</span><span class="btn2">View All Account</span>
</div>
<div class="panel" style="left:1360px;top:226px;width:528px;height:345.5px"><div class="bt red"></div><h3 style="left:11px;letter-spacing:0.08px">Newest Employees</h3><div class="hs"></div>
<div class="pp" style="left:0px;top:50.0px"><svg width="65" height="65" viewBox="0 0 64 64"><defs><clipPath id="cc"><circle cx="32" cy="32" r="32"/></clipPath></defs><circle cx="32" cy="32" r="32" fill="#dfe5ec"/><g clip-path="url(#cc)" fill="#9cadbc"><path d="M8.5 68Q8.5 44 25 42.6H39Q55.5 44 55.5 68z"/><circle cx="32" cy="27.3" r="15.4" fill="#dfe5ec"/><circle cx="32" cy="27.3" r="14.4"/></g></svg><div class="pn">chino nacho</div><div class="pd" style="top:85.8px">Aug 28, 2024</div></div>
<div class="pp" style="left:132px;top:50.0px"><svg width="65" height="65" viewBox="0 0 64 64"><defs><clipPath id="cc"><circle cx="32" cy="32" r="32"/></clipPath></defs><circle cx="32" cy="32" r="32" fill="#dfe5ec"/><g clip-path="url(#cc)" fill="#9cadbc"><path d="M8.5 68Q8.5 44 25 42.6H39Q55.5 44 55.5 68z"/><circle cx="32" cy="27.3" r="15.4" fill="#dfe5ec"/><circle cx="32" cy="27.3" r="14.4"/></g></svg><div class="pn">Daffy Duck</div><div class="pd" style="top:85.8px">Aug 27, 2024</div></div>
<div class="pp" style="left:264px;top:50.0px"><svg width="65" height="65" viewBox="0 0 64 64"><defs><clipPath id="cc"><circle cx="32" cy="32" r="32"/></clipPath></defs><circle cx="32" cy="32" r="32" fill="#dfe5ec"/><g clip-path="url(#cc)" fill="#9cadbc"><path d="M8.5 68Q8.5 44 25 42.6H39Q55.5 44 55.5 68z"/><circle cx="32" cy="27.3" r="15.4" fill="#dfe5ec"/><circle cx="32" cy="27.3" r="14.4"/></g></svg><div class="pn">Mary Poppins</div><div class="pd" style="top:85.8px">Aug 22, 2024</div></div>
<div class="pp" style="left:396px;top:50.0px"><svg width="65" height="65" viewBox="0 0 64 64"><defs><clipPath id="cc"><circle cx="32" cy="32" r="32"/></clipPath></defs><circle cx="32" cy="32" r="32" fill="#dfe5ec"/><g clip-path="url(#cc)" fill="#9cadbc"><path d="M8.5 68Q8.5 44 25 42.6H39Q55.5 44 55.5 68z"/><circle cx="32" cy="27.3" r="15.4" fill="#dfe5ec"/><circle cx="32" cy="27.3" r="14.4"/></g></svg><div class="pn">Elmer Fudd</div><div class="pd" style="top:85.8px">Aug 20, 2024</div></div>
<div class="pp" style="left:0px;top:183.0px"><svg width="65" height="65" viewBox="0 0 64 64"><defs><clipPath id="cc"><circle cx="32" cy="32" r="32"/></clipPath></defs><circle cx="32" cy="32" r="32" fill="#dfe5ec"/><g clip-path="url(#cc)" fill="#9cadbc"><path d="M8.5 68Q8.5 44 25 42.6H39Q55.5 44 55.5 68z"/><circle cx="32" cy="27.3" r="15.4" fill="#dfe5ec"/><circle cx="32" cy="27.3" r="14.4"/></g></svg><div class="pn">Luis Valdez</div><div class="pd" style="top:86.8px">Aug 15, 2024</div></div>
<div class="pp" style="left:132px;top:183.0px"><svg width="65" height="65" viewBox="0 0 64 64"><defs><clipPath id="cc"><circle cx="32" cy="32" r="32"/></clipPath></defs><circle cx="32" cy="32" r="32" fill="#dfe5ec"/><g clip-path="url(#cc)" fill="#9cadbc"><path d="M8.5 68Q8.5 44 25 42.6H39Q55.5 44 55.5 68z"/><circle cx="32" cy="27.3" r="15.4" fill="#dfe5ec"/><circle cx="32" cy="27.3" r="14.4"/></g></svg><div class="pn"><span style="letter-spacing:-.05px">DEMO EMPLOY...</span></div><div class="pd" style="top:86.8px">Aug 08, 2024</div></div>
<div class="pp" style="left:264px;top:183.0px"><svg width="65" height="65" viewBox="0 0 64 64"><defs><clipPath id="cc"><circle cx="32" cy="32" r="32"/></clipPath></defs><circle cx="32" cy="32" r="32" fill="#dfe5ec"/><g clip-path="url(#cc)" fill="#9cadbc"><path d="M8.5 68Q8.5 44 25 42.6H39Q55.5 44 55.5 68z"/><circle cx="32" cy="27.3" r="15.4" fill="#dfe5ec"/><circle cx="32" cy="27.3" r="14.4"/></g></svg><div class="pn">Luis jimenez</div><div class="pd" style="top:86.8px">Aug 08, 2024</div></div>
<div class="pp" style="left:396px;top:183.0px"><svg width="65" height="65" viewBox="0 0 64 64"><defs><clipPath id="cc"><circle cx="32" cy="32" r="32"/></clipPath></defs><circle cx="32" cy="32" r="32" fill="#dfe5ec"/><g clip-path="url(#cc)" fill="#9cadbc"><path d="M8.5 68Q8.5 44 25 42.6H39Q55.5 44 55.5 68z"/><circle cx="32" cy="27.3" r="15.4" fill="#dfe5ec"/><circle cx="32" cy="27.3" r="14.4"/></g></svg><div class="pn">Sebastian Nava</div><div class="pd" style="top:86.8px">Jul 29, 2024</div></div>
<div class="fs2"></div><a class="va">View All Guards</a></div>
<div class="panel" style="left:1360px;top:577px;width:528px;height:346.7px"><div class="bt red"></div><h3 style="left:11px;letter-spacing:0.34px">Newest Admin Staff</h3><div class="hs"></div>
<div class="pp" style="left:0px;top:50.0px"><svg width="65" height="65" viewBox="0 0 64 64"><defs><clipPath id="cc"><circle cx="32" cy="32" r="32"/></clipPath></defs><circle cx="32" cy="32" r="32" fill="#dfe5ec"/><g clip-path="url(#cc)" fill="#9cadbc"><path d="M8.5 68Q8.5 44 25 42.6H39Q55.5 44 55.5 68z"/><circle cx="32" cy="27.3" r="15.4" fill="#dfe5ec"/><circle cx="32" cy="27.3" r="14.4"/></g></svg><div class="pn">Amanda Bartlett</div><div class="pd" style="top:86.6px">Sep 04, 2024</div></div>
<div class="pp" style="left:132px;top:50.0px"><svg width="65" height="65" viewBox="0 0 64 64"><defs><clipPath id="cc"><circle cx="32" cy="32" r="32"/></clipPath></defs><circle cx="32" cy="32" r="32" fill="#dfe5ec"/><g clip-path="url(#cc)" fill="#9cadbc"><path d="M8.5 68Q8.5 44 25 42.6H39Q55.5 44 55.5 68z"/><circle cx="32" cy="27.3" r="15.4" fill="#dfe5ec"/><circle cx="32" cy="27.3" r="14.4"/></g></svg><div class="pn">Nick Anderson</div><div class="pd" style="top:86.6px">Aug 05, 2024</div></div>
<div class="pp" style="left:264px;top:50.0px"><svg width="65" height="65" viewBox="0 0 64 64"><defs><clipPath id="cc"><circle cx="32" cy="32" r="32"/></clipPath></defs><circle cx="32" cy="32" r="32" fill="#dfe5ec"/><g clip-path="url(#cc)" fill="#9cadbc"><path d="M8.5 68Q8.5 44 25 42.6H39Q55.5 44 55.5 68z"/><circle cx="32" cy="27.3" r="15.4" fill="#dfe5ec"/><circle cx="32" cy="27.3" r="14.4"/></g></svg><div class="pn">Luis Val</div><div class="pd" style="top:86.6px">Jul 11, 2024</div></div>
<div class="pp" style="left:396px;top:50.0px"><svg width="65" height="65" viewBox="0 0 64 64"><defs><clipPath id="cc"><circle cx="32" cy="32" r="32"/></clipPath></defs><circle cx="32" cy="32" r="32" fill="#dfe5ec"/><g clip-path="url(#cc)" fill="#9cadbc"><path d="M8.5 68Q8.5 44 25 42.6H39Q55.5 44 55.5 68z"/><circle cx="32" cy="27.3" r="15.4" fill="#dfe5ec"/><circle cx="32" cy="27.3" r="14.4"/></g></svg><div class="pn">Claudia Puente</div><div class="pd" style="top:86.6px">Jul 03, 2024</div></div>
<div class="pp" style="left:0px;top:183.9px"><svg width="65" height="65" viewBox="0 0 64 64"><defs><clipPath id="cc"><circle cx="32" cy="32" r="32"/></clipPath></defs><circle cx="32" cy="32" r="32" fill="#dfe5ec"/><g clip-path="url(#cc)" fill="#9cadbc"><path d="M8.5 68Q8.5 44 25 42.6H39Q55.5 44 55.5 68z"/><circle cx="32" cy="27.3" r="15.4" fill="#dfe5ec"/><circle cx="32" cy="27.3" r="14.4"/></g></svg><div class="pn">Jobtarget team</div><div class="pd" style="top:85.8px">Apr 23, 2024</div></div>
<div class="pp" style="left:132px;top:183.9px"><svg width="65" height="65" viewBox="0 0 64 64"><defs><clipPath id="cc"><circle cx="32" cy="32" r="32"/></clipPath></defs><circle cx="32" cy="32" r="32" fill="#dfe5ec"/><g clip-path="url(#cc)" fill="#9cadbc"><path d="M8.5 68Q8.5 44 25 42.6H39Q55.5 44 55.5 68z"/><circle cx="32" cy="27.3" r="15.4" fill="#dfe5ec"/><circle cx="32" cy="27.3" r="14.4"/></g></svg><div class="pn">Taylor Testingg ...</div><div class="pd" style="top:85.8px">Feb 19, 2024</div></div>
<div class="pp" style="left:264px;top:183.9px"><svg width="65" height="65" viewBox="0 0 64 64"><defs><clipPath id="cc"><circle cx="32" cy="32" r="32"/></clipPath></defs><circle cx="32" cy="32" r="32" fill="#dfe5ec"/><g clip-path="url(#cc)" fill="#9cadbc"><path d="M8.5 68Q8.5 44 25 42.6H39Q55.5 44 55.5 68z"/><circle cx="32" cy="27.3" r="15.4" fill="#dfe5ec"/><circle cx="32" cy="27.3" r="14.4"/></g></svg><div class="pn">Admin Admin</div><div class="pd" style="top:85.8px">Dec 04, 2023</div></div>
<div class="pp" style="left:396px;top:183.9px"><svg width="65" height="65" viewBox="0 0 64 64"><defs><clipPath id="cc"><circle cx="32" cy="32" r="32"/></clipPath></defs><circle cx="32" cy="32" r="32" fill="#dfe5ec"/><g clip-path="url(#cc)" fill="#9cadbc"><path d="M8.5 68Q8.5 44 25 42.6H39Q55.5 44 55.5 68z"/><circle cx="32" cy="27.3" r="15.4" fill="#dfe5ec"/><circle cx="32" cy="27.3" r="14.4"/></g></svg><div class="pn">Vincent Ynez</div><div class="pd" style="top:85.8px">Sep 07, 2023</div></div>
<div class="fs2"></div><a class="va">View Office Employee</a></div>
<div class="panel" style="left:1360px;top:929px;width:528px;height:60px"><div class="bt red"></div><h3 style="left:11px;letter-spacing:.3px">Industry Wise Accounts</h3></div>
</body>
</html>
